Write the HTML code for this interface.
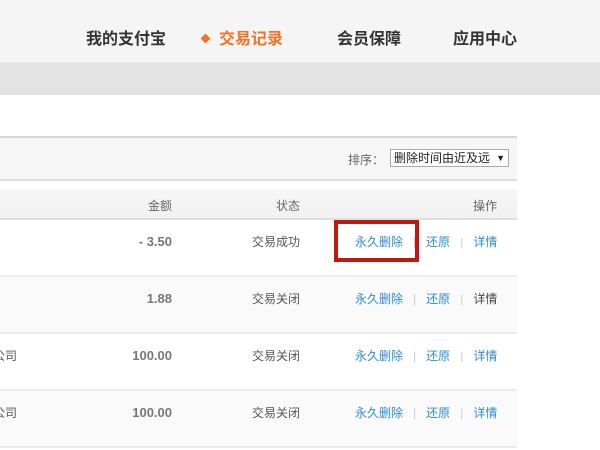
<!DOCTYPE html>
<html><head><meta charset="utf-8"><style>
*{margin:0;padding:0;box-sizing:border-box}
body{width:600px;height:450px;overflow:hidden;background:#fff;position:relative;font-family:"Liberation Sans","Noto Sans CJK SC",sans-serif;font-size:12px;color:#555}
.a{position:absolute;white-space:nowrap}
.nav{font-size:16px;font-weight:bold;color:#333;top:25px}
.b{color:#2f8dd0}
.sep{color:#ccc}
.amt{font-weight:bold;color:#777;font-size:13px;right:428px}
</style></head><body>
<div class="a" style="left:0;top:0;width:600px;height:62px;background:#f5f5f5"></div>
<div class="a" style="left:0;top:62px;width:600px;height:1px;background:#e6e6e6"></div>
<div class="a" style="left:0;top:63px;width:600px;height:32px;background:#e3e3e3"></div>
<div class="a nav" style="left:86px">我的支付宝</div>
<div class="a" style="top:35px;width:7px;height:7px;background:#f07326;transform:rotate(45deg);left:202px"></div>
<div class="a nav" style="left:219px;color:#f07326">交易记录</div>
<div class="a nav" style="left:337px">会员保障</div>
<div class="a nav" style="left:453px">应用中心</div>

<div class="a" style="left:0;top:136px;width:517px;height:2px;background:#d6d6d6"></div>
<div class="a" style="left:0;top:138px;width:517px;height:41px;background:#f6f6f6"></div>
<div class="a" style="left:0;top:179px;width:517px;height:2px;background:#dedede"></div>
<div class="a" style="left:348px;top:151px;color:#666">排序：</div>
<div class="a" style="left:390px;top:149px;width:119px;height:18px;border:1px solid #aaa;background:#fff;font-size:12px;color:#222;padding:0 3px;line-height:16px">删除时间由近及远 <span style="font-size:9px;float:right">▼</span></div>
<div class="a" style="left:0;top:189px;width:517px;height:29px;background:linear-gradient(#f7f7f7,#f1f1f1)"></div>
<div class="a" style="left:0;top:218px;width:517px;height:2px;background:#dedede"></div>
<div class="a" style="left:148px;top:197px;color:#666">金额</div>
<div class="a" style="left:276px;top:197px;color:#666">状态</div>
<div class="a" style="left:473px;top:197px;color:#666">操作</div>

<div class="a" style="left:0;top:275px;width:517px;height:2px;background:#ececec"></div>
<div class="a" style="left:0;top:277px;width:517px;height:55px;background:#fafafa"></div>
<div class="a" style="left:0;top:332px;width:517px;height:2px;background:#ececec"></div>
<div class="a" style="left:0;top:389px;width:517px;height:2px;background:#ececec"></div>
<div class="a" style="left:0;top:391px;width:517px;height:55px;background:#fafafa"></div>
<div class="a" style="left:0;top:446px;width:517px;height:2px;background:#ececec"></div>

<div class="a amt" style="top:234px">- 3.50</div>
<div class="a amt" style="top:291px">1.88</div>
<div class="a amt" style="top:348px">100.00</div>
<div class="a amt" style="top:405px">100.00</div>
<div class="a" style="left:-7px;top:347px">公司</div>
<div class="a" style="left:-7px;top:404px">公司</div>

<div class="a" style="left:252px;top:233px">交易成功</div>
<div class="a" style="left:252px;top:290px">交易关闭</div>
<div class="a" style="left:252px;top:347px">交易关闭</div>
<div class="a" style="left:252px;top:404px">交易关闭</div>

<div class="a" style="left:355px;top:233px"><span class="b">永久删除</span>&nbsp;&nbsp;&nbsp;<span class="sep">|</span>&nbsp;&nbsp;&nbsp;<span class="b">还原</span>&nbsp;&nbsp;&nbsp;<span class="sep">|</span>&nbsp;&nbsp;&nbsp;<span class="b">详情</span></div>
<div class="a" style="left:355px;top:290px"><span class="b">永久删除</span>&nbsp;&nbsp;&nbsp;<span class="sep">|</span>&nbsp;&nbsp;&nbsp;<span class="b">还原</span>&nbsp;&nbsp;&nbsp;<span class="sep">|</span>&nbsp;&nbsp;&nbsp;<span style="color:#444">详情</span></div>
<div class="a" style="left:355px;top:347px"><span class="b">永久删除</span>&nbsp;&nbsp;&nbsp;<span class="sep">|</span>&nbsp;&nbsp;&nbsp;<span class="b">还原</span>&nbsp;&nbsp;&nbsp;<span class="sep">|</span>&nbsp;&nbsp;&nbsp;<span class="b">详情</span></div>
<div class="a" style="left:355px;top:404px"><span class="b">永久删除</span>&nbsp;&nbsp;&nbsp;<span class="sep">|</span>&nbsp;&nbsp;&nbsp;<span class="b">还原</span>&nbsp;&nbsp;&nbsp;<span class="sep">|</span>&nbsp;&nbsp;&nbsp;<span class="b">详情</span></div>

<div class="a" style="left:334px;top:220px;width:85px;height:42px;border:4px solid #c0170f;background:transparent"></div>
</body></html>
